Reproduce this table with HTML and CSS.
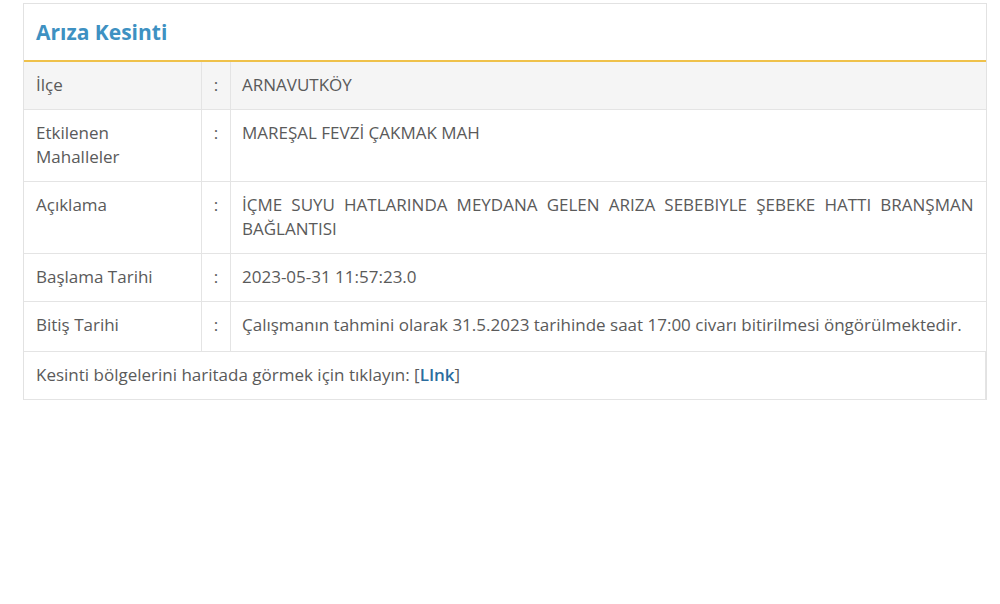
FILE: index.html
```html
<!DOCTYPE html>
<html lang="tr">
<head>
    <meta charset="UTF-8">
    <meta name="viewport" content="width=device-width, initial-scale=1.0">
    <title>Arıza Kesinti</title>
    <link rel="stylesheet" href="styles.css">
</head>

<body>
    <div class="panel">
        <div class="panel-head">
            <h2>Arıza Kesinti</h2>
        </div>

        <!-- Kesinti bilgileri -->
        <table class="info">
            <tr class="first">
                <td class="label">İlçe</td>
                <td class="sep">:</td>
                <td class="value">ARNAVUTKÖY</td>
            </tr>
            <tr>
                <td class="label">Etkilenen<br>Mahalleler</td>
                <td class="sep">:</td>
                <td class="value">MAREŞAL FEVZİ ÇAKMAK MAH</td>
            </tr>
            <tr>
                <td class="label">Açıklama</td>
                <td class="sep">:</td>
                <td class="value justify">İÇME SUYU HATLARINDA MEYDANA GELEN ARIZA SEBEBIYLE ŞEBEKE HATTI BRANŞMAN BAĞLANTISI</td>
            </tr>
            <tr>
                <td class="label">Başlama Tarihi</td>
                <td class="sep">:</td>
                <td class="value">2023-05-31 11:57:23.0</td>
            </tr>
            <tr class="tall">
                <td class="label">Bitiş Tarihi</td>
                <td class="sep">:</td>
                <td class="value">Çalışmanın tahmini olarak 31.5.2023 tarihinde saat 17:00 civarı bitirilmesi öngörülmektedir.</td>
            </tr>
            <tr>
                <td class="label" colspan="3">Kesinti bölgelerini haritada görmek için tıklayın: [<a href="#">LInk</a>]</td>
            </tr>
        </table>
    </div>
</body>
</html>
```

FILE: styles.css
```css
body {
    font-family: "Open Sans", Arial, sans-serif;
    margin: 0;
    padding: 3px 13px 0 23px;
    background-color: #fff;
    color: #5a5a5a;
    font-size: 17px;
}

.panel {
    border: 1px solid #e2e2e2;
    border-bottom: none;
}

.panel-head {
    height: 56px;
    padding: 0 12px;
    display: flex;
    align-items: center;
    border-bottom: 2px solid #efc14a;
}

.panel-head h2 {
    margin: 0;
    font-size: 21px;
    font-weight: bold;
    color: #3e91c2;
}

.info {
    width: 100%;
    border-collapse: collapse;
}

.info td {
    border-top: 1px solid #e4e4e4;
    border-bottom: 1px solid #e4e4e4;
    padding: 11px 12px 12px 12px;
    line-height: 24px;
    vertical-align: top;
}

.info tr.first td {
    background-color: #f5f5f5;
    border-top: none;
}

.info tr.tall td {
    padding-bottom: 14px;
}

.info td.label {
    width: 153px;
    padding-left: 12px;
    border-right: 1px solid #e4e4e4;
}

.info td.sep {
    width: 28px;
    padding-left: 0;
    padding-right: 0;
    text-align: center;
    border-right: 1px solid #e4e4e4;
}

.info td.value {
    padding-left: 11px;
}

.info td.justify {
    text-align: justify;
}

.info a {
    color: #2b6d9e;
    font-weight: 600;
    text-decoration: none;
}
```
